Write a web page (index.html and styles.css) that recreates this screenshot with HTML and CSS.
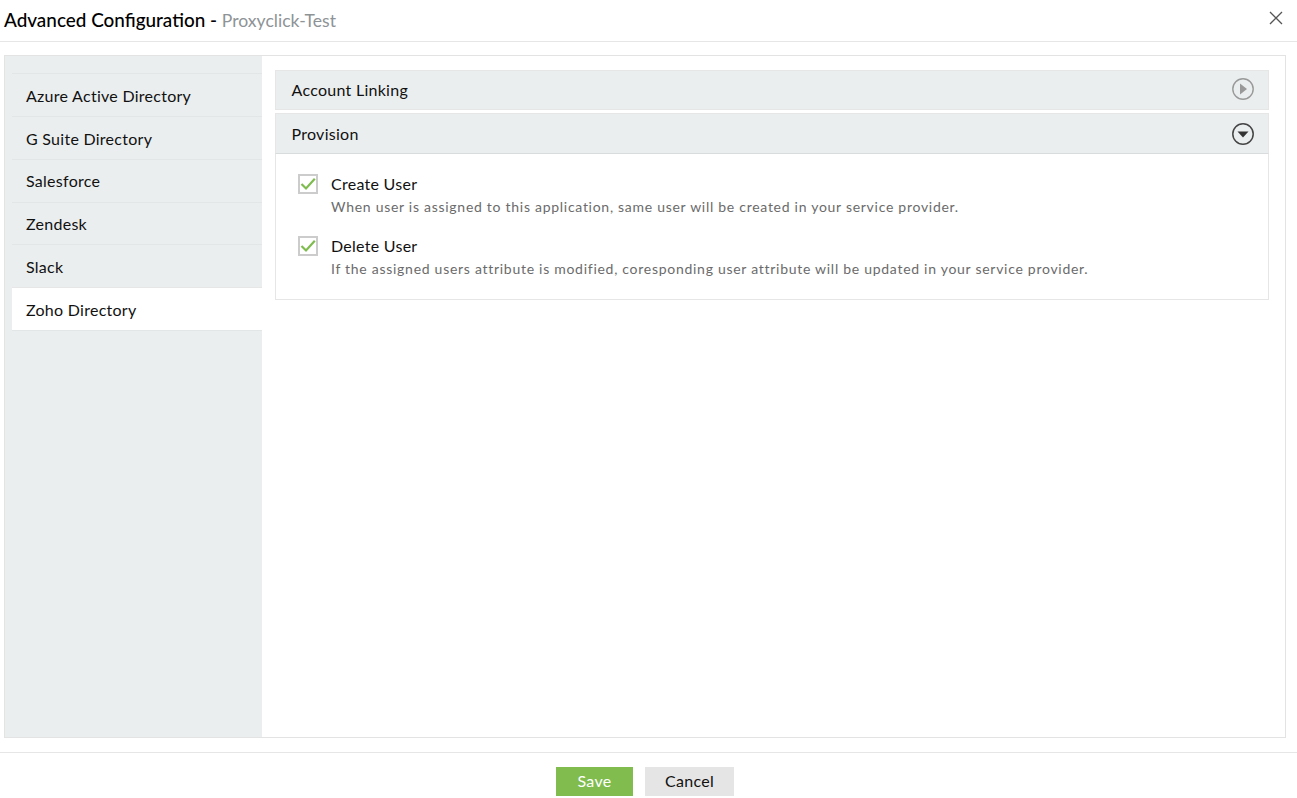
FILE: index.html
```html
<!DOCTYPE html>
<html lang="en">
<head>
<meta charset="utf-8">
<title>Advanced Configuration</title>
<link rel="stylesheet" href="styles.css">
</head>
<body>
<div class="dialog">
  <header class="head">
    <h1 class="title">Advanced Configuration - <span class="sub">Proxyclick-Test</span></h1>
    <button class="close" aria-label="Close">
      <svg width="14" height="14" viewBox="0 0 14 14"><path d="M1 1L13 13M13 1L1 13" stroke="#555" stroke-width="1.3" fill="none"/></svg>
    </button>
  </header>
  <main class="frame">
    <nav class="side">
      <a class="item">Azure Active Directory</a>
      <a class="item">G Suite Directory</a>
      <a class="item shift">Salesforce</a>
      <a class="item shift">Zendesk</a>
      <a class="item shift">Slack</a>
      <a class="item active">Zoho Directory</a>
    </nav>
    <section class="content">
      <div class="bar first">
        <span>Account Linking</span>
        <svg width="24" height="24" viewBox="0 0 24 24"><circle cx="12" cy="12" r="10.2" fill="none" stroke="#999" stroke-width="1.4"/><path d="M9 6.5L16 12L9 17.5Z" fill="#999"/></svg>
      </div>
      <div class="bar open">
        <span>Provision</span>
        <svg width="24" height="24" viewBox="0 0 24 24"><circle cx="12" cy="12" r="10.2" fill="none" stroke="#444" stroke-width="1.5"/><path d="M6.5 9.5H17.5L12 15.5Z" fill="#333"/></svg>
      </div>
      <div class="panel">
        <div class="opt">
          <span class="check"><svg width="16" height="14" viewBox="0 0 16 14"><path d="M1.5 7L6 11.5L14.8 1.8" fill="none" stroke="#7fbc4e" stroke-width="2.2"/></svg></span>
          <div>
            <div class="opt-name">Create User</div>
            <div class="opt-desc">When user is assigned to this application, same user will be created in your service provider.</div>
          </div>
        </div>
        <div class="opt">
          <span class="check"><svg width="16" height="14" viewBox="0 0 16 14"><path d="M1.5 7L6 11.5L14.8 1.8" fill="none" stroke="#7fbc4e" stroke-width="2.2"/></svg></span>
          <div>
            <div class="opt-name">Delete User</div>
            <div class="opt-desc">If the assigned users attribute is modified, coresponding user attribute will be updated in your service provider.</div>
          </div>
        </div>
      </div>
    </section>
  </main>
  <footer class="foot">
    <button class="btn save">Save</button>
    <button class="btn cancel">Cancel</button>
  </footer>
</div>
</body>
</html>
```
FILE: styles.css
```css
* { box-sizing: border-box; }
html, body { margin: 0; height: 100%; overflow: hidden; background: #fff; }
body { font-family: Lato, "Liberation Sans", sans-serif; color: #111; }
.dialog { display: flex; flex-direction: column; height: 798px; }
.head {
  height: 42px; flex: none; display: flex; align-items: center; justify-content: space-between;
  padding: 0 14px 3px 4px; border-bottom: 1px solid #e6e6e6;
}
.title { margin: 0; font-size: 18.9px; font-weight: 500; color: #000; }
.sub { font-size: 17.6px; font-weight: 400; color: #8e9396; }
.close { border: 0; background: none; padding: 0; margin-bottom: 2px; display: flex; }
.frame {
  flex: none; height: 683px; margin: 13px 11px 0 4px; border: 1px solid #e3e3e3; display: flex;
}
.side { width: 257px; flex: none; background: #ebeeef; padding: 17px 0 0 7px; }
.item {
  display: flex; align-items: center; height: 42.85px; padding: 2px 0 0 14px;
  border-top: 1px solid #e3e6e7; font-size: 16px; letter-spacing: 0.27px; color: #111;
}
.item.shift { padding-top: 0; }
.item.active { background: #fff; height: 44px; padding-top: 0; border-top-color: #e6e6e6; border-bottom: 1px solid #e3e6e7; }
.content { flex: 1; padding: 14px 16px 0 13px; }
.bar {
  display: flex; align-items: center; justify-content: space-between;
  background: #ebeeef; border: 1px solid #e6e6e6; padding: 0 13px 0 15.5px;
  font-size: 16px; letter-spacing: 0.27px; color: #111;
}
.bar.first { height: 40px; margin-bottom: 3px; padding-bottom: 2px; }
.bar.open { height: 41px; border-bottom-color: #d9dcdd; }
.panel { border: 1px solid #e6e6e6; border-top: 0; height: 146px; padding: 20px 22px 0; display: flex; flex-direction: column; gap: 17px; }
.opt { display: flex; gap: 13px; }
.check {
  width: 20px; height: 20px; flex: none; border: 2px solid #ccc; background: #fff;
  display: flex; align-items: center; justify-content: center;
}
.opt-name { font-size: 16px; letter-spacing: 0.27px; line-height: 21px; margin-top: -1px; color: #111; }
.opt-desc { font-size: 14px; letter-spacing: 0.72px; line-height: 23px; margin-bottom: 1px; padding-top: 1px; color: #6b6b6b; }
.foot {
  flex: 1; margin-top: 14px; border-top: 1px solid #e6e6e6; display: flex; justify-content: center;
  gap: 12px; padding: 14px 7px 0 0;
}
.btn { height: 29px; border: 0; font-family: inherit; font-size: 16px; letter-spacing: 0.27px; padding: 0 0 2px; }
.save { width: 77px; background: #80bc4e; color: #fff; }
.cancel { width: 89px; background: #e5e5e5; color: #111; }
```
